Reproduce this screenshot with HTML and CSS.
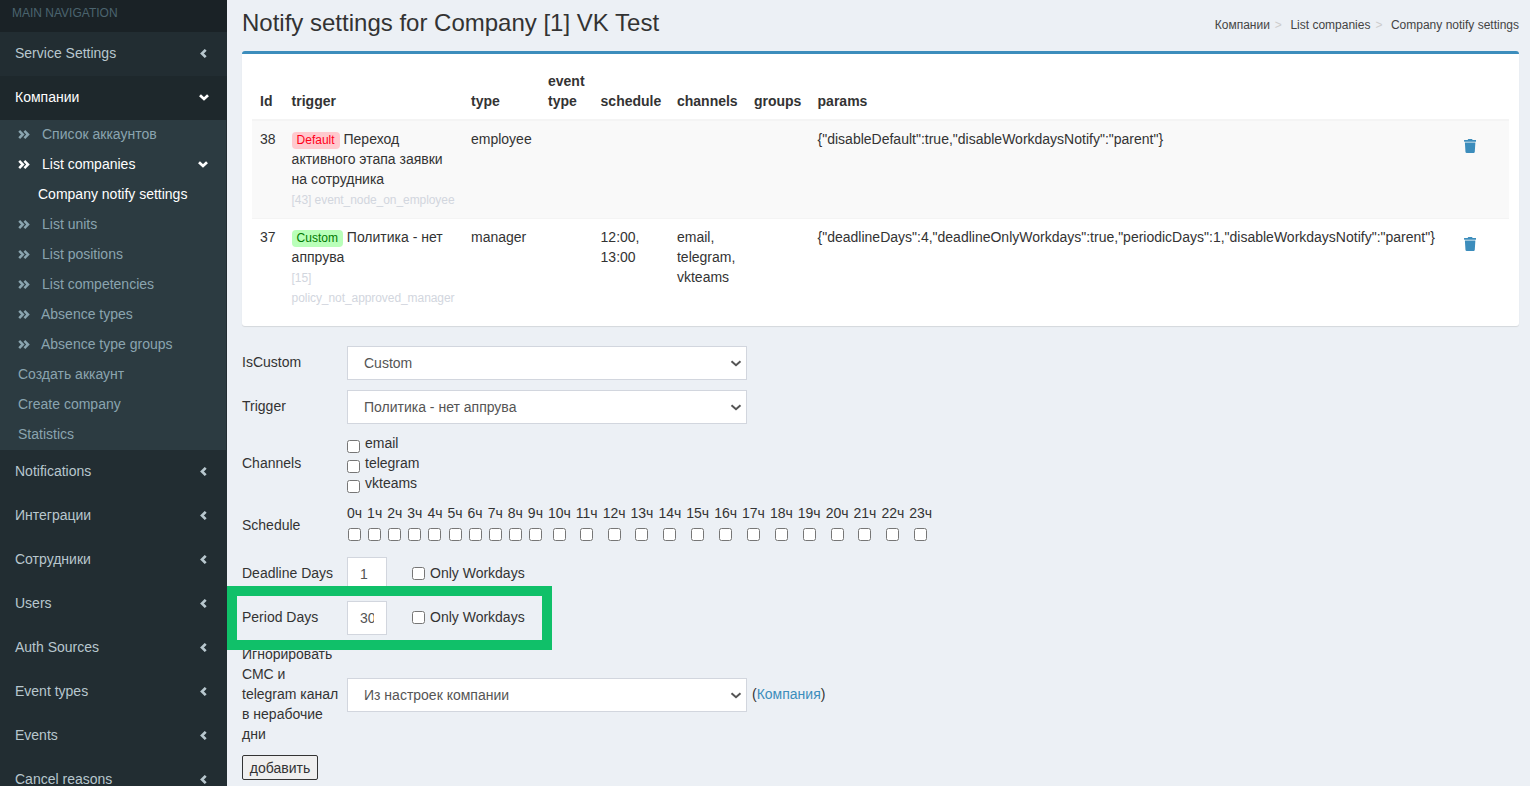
FILE: index.html
```html
<!DOCTYPE html>
<html lang="en">
<head>
<meta charset="utf-8">
<title>Notify settings</title>
<link rel="stylesheet" href="styles.css">
</head>
<body>
<svg class="defs" width="0" height="0" aria-hidden="true">
  <symbol id="left" viewBox="0 0 7 9"><path d="M5.7 .9 2 4.5 5.7 8.1" fill="none" stroke="currentColor" stroke-width="2.7"/></symbol>
  <symbol id="down" viewBox="0 0 10 7"><path d="M1 1.2 5 5 9 1.2" fill="none" stroke="currentColor" stroke-width="2.7"/></symbol>
  <symbol id="dbl" viewBox="0 0 12 9"><path d="M1.2 .9 4.8 4.5 1.2 8.1M6.4 .9 10 4.5 6.4 8.1" fill="none" stroke="currentColor" stroke-width="2.5"/></symbol>
  <symbol id="trash" viewBox="0 0 448 512"><path fill="currentColor" d="M432 32H312l-9.4-18.7A24 24 0 0 0 281.1 0H166.8a23.72 23.72 0 0 0-21.4 13.3L136 32H16A16 16 0 0 0 0 48v32a16 16 0 0 0 16 16h416a16 16 0 0 0 16-16V48a16 16 0 0 0-16-16zM53.2 467a48 48 0 0 0 47.9 45h245.8a48 48 0 0 0 47.9-45L416 128H32z"/></symbol>
</svg>

<aside class="sidebar">
  <div class="nav-header">MAIN NAVIGATION</div>
  <a class="nav-item"><span>Service Settings</span><svg class="ico-left"><use href="#left"/></svg></a>
  <a class="nav-item active"><span>Компании</span><svg class="ico-down"><use href="#down"/></svg></a>
  <div class="tree">
    <a class="tree-item"><svg class="ico-dbl"><use href="#dbl"/></svg><span class="grow">Список аккаунтов</span></a>
    <a class="tree-item current"><svg class="ico-dbl"><use href="#dbl"/></svg><span class="grow">List companies</span><svg class="ico-down"><use href="#down"/></svg></a>
    <a class="tree-item sub">Company notify settings</a>
    <a class="tree-item"><svg class="ico-dbl"><use href="#dbl"/></svg><span class="grow">List units</span></a>
    <a class="tree-item"><svg class="ico-dbl"><use href="#dbl"/></svg><span class="grow">List positions</span></a>
    <a class="tree-item"><svg class="ico-dbl"><use href="#dbl"/></svg><span class="grow">List competencies</span></a>
    <a class="tree-item tight"><svg class="ico-dbl"><use href="#dbl"/></svg><span class="grow">Absence types</span></a>
    <a class="tree-item tight"><svg class="ico-dbl"><use href="#dbl"/></svg><span class="grow">Absence type groups</span></a>
    <a class="tree-item plain">Создать аккаунт</a>
    <a class="tree-item plain">Create company</a>
    <a class="tree-item plain">Statistics</a>
  </div>
  <a class="nav-item"><span>Notifications</span><svg class="ico-left"><use href="#left"/></svg></a>
  <a class="nav-item"><span>Интеграции</span><svg class="ico-left"><use href="#left"/></svg></a>
  <a class="nav-item"><span>Сотрудники</span><svg class="ico-left"><use href="#left"/></svg></a>
  <a class="nav-item"><span>Users</span><svg class="ico-left"><use href="#left"/></svg></a>
  <a class="nav-item"><span>Auth Sources</span><svg class="ico-left"><use href="#left"/></svg></a>
  <a class="nav-item"><span>Event types</span><svg class="ico-left"><use href="#left"/></svg></a>
  <a class="nav-item"><span>Events</span><svg class="ico-left"><use href="#left"/></svg></a>
  <a class="nav-item"><span>Cancel reasons</span><svg class="ico-left"><use href="#left"/></svg></a>
</aside>

<main class="content">
  <header class="page-head">
    <h1>Notify settings for Company [1] VK Test</h1>
    <nav class="crumbs">
      <a>Компании</a><i>&gt;</i><a>List companies</a><i>&gt;</i><a>Company notify settings</a>
    </nav>
  </header>

  <section class="box">
    <table class="data">
      <colgroup>
        <col class="c-id"><col class="c-trigger"><col class="c-type"><col class="c-event"><col class="c-sched"><col class="c-chan"><col class="c-groups"><col class="c-params"><col class="c-del">
      </colgroup>
      <thead>
        <tr><th>Id</th><th>trigger</th><th>type</th><th>event type</th><th>schedule</th><th>channels</th><th>groups</th><th>params</th><th></th></tr>
      </thead>
      <tbody>
        <tr class="odd">
          <td>38</td>
          <td><span class="tag tag-default">Default</span> Переход активного этапа заявки на сотрудника<div class="hint">[43] event_node_on_employee</div></td>
          <td>employee</td><td></td><td></td><td></td><td></td>
          <td>{"disableDefault":true,"disableWorkdaysNotify":"parent"}</td>
          <td><svg class="trash"><use href="#trash"/></svg></td>
        </tr>
        <tr>
          <td>37</td>
          <td><span class="tag tag-custom">Custom</span> Политика - нет аппрува<div class="hint">[15] policy_not_approved_manager</div></td>
          <td>manager</td><td></td><td>12:00, 13:00</td><td>email, telegram, vkteams</td><td></td>
          <td>{"deadlineDays":4,"deadlineOnlyWorkdays":true,"periodicDays":1,"disableWorkdaysNotify":"parent"}</td>
          <td><svg class="trash"><use href="#trash"/></svg></td>
        </tr>
      </tbody>
    </table>
  </section>

  <form class="form">
    <div class="row row-ctl">
      <label class="lbl">IsCustom</label>
      <select class="sel"><option>Custom</option><option>Default</option></select>
    </div>
    <div class="row row-ctl row-tight">
      <label class="lbl">Trigger</label>
      <select class="sel"><option>Политика - нет аппрува</option></select>
    </div>
    <div class="row">
      <label class="lbl">Channels</label>
      <div class="checks">
        <label class="chk"><input type="checkbox">email</label>
        <label class="chk"><input type="checkbox">telegram</label>
        <label class="chk"><input type="checkbox">vkteams</label>
      </div>
    </div>
    <div class="row">
      <label class="lbl">Schedule</label>
      <div class="hours">
        <label class="hour">0ч<input type="checkbox"></label>
        <label class="hour">1ч<input type="checkbox"></label>
        <label class="hour">2ч<input type="checkbox"></label>
        <label class="hour">3ч<input type="checkbox"></label>
        <label class="hour">4ч<input type="checkbox"></label>
        <label class="hour">5ч<input type="checkbox"></label>
        <label class="hour">6ч<input type="checkbox"></label>
        <label class="hour">7ч<input type="checkbox"></label>
        <label class="hour">8ч<input type="checkbox"></label>
        <label class="hour">9ч<input type="checkbox"></label>
        <label class="hour">10ч<input type="checkbox"></label>
        <label class="hour">11ч<input type="checkbox"></label>
        <label class="hour">12ч<input type="checkbox"></label>
        <label class="hour">13ч<input type="checkbox"></label>
        <label class="hour">14ч<input type="checkbox"></label>
        <label class="hour">15ч<input type="checkbox"></label>
        <label class="hour">16ч<input type="checkbox"></label>
        <label class="hour">17ч<input type="checkbox"></label>
        <label class="hour">18ч<input type="checkbox"></label>
        <label class="hour">19ч<input type="checkbox"></label>
        <label class="hour">20ч<input type="checkbox"></label>
        <label class="hour">21ч<input type="checkbox"></label>
        <label class="hour">22ч<input type="checkbox"></label>
        <label class="hour">23ч<input type="checkbox"></label>
      </div>
    </div>
    <div class="row row-ctl">
      <label class="lbl">Deadline Days</label>
      <input class="num" type="text" value="1">
      <label class="only"><input type="checkbox">Only Workdays</label>
    </div>
    <div class="row row-ctl">
      <label class="lbl">Period Days</label>
      <input class="num" type="text" value="30">
      <label class="only"><input type="checkbox">Only Workdays</label>
    </div>
    <div class="row row-last">
      <label class="lbl lbl-wrap">Игнорировать СМС и telegram канал в нерабочие дни</label>
      <select class="sel"><option>Из настроек компании</option></select>
      <span class="company-link">(<a>Компания</a>)</span>
    </div>
    <button class="submit" type="button">добавить</button>
  </form>
</main>

<div class="highlight"></div>
</body>
</html>
```

FILE: styles.css
```css
* { box-sizing: border-box; }
html, body { height: 786px; overflow: hidden; }
body {
  margin: 0;
  display: flex;
  background: #ecf0f5;
  color: #333;
  font: 14px/20px "Liberation Sans", Arial, sans-serif;
}
.defs { position: absolute; }

/* sidebar */
.sidebar { flex: 0 0 227px; height: 786px; overflow: hidden; background: #222d32; }
.nav-header { height: 32px; padding: 3px 12px; background: #1a2226; color: #4b646f; font-size: 12px; }
.nav-item {
  display: flex; align-items: center; justify-content: space-between;
  height: 44px; padding: 0 20px 2px 15px; color: #b8c7ce;
}
.nav-item.active { background: #1e282c; color: #fff; padding-right: 18px; }
.ico-left { width: 7px; height: 9px; color: #b8c7ce; }
.ico-down { width: 10px; height: 7px; color: #fff; }
.tree { background: #2c3b41; margin-right: 1px; }
.tree-item { display: flex; align-items: center; height: 30px; padding: 0 18px 2px; color: #8aa4af; }
.ico-dbl { width: 12px; height: 9px; margin-right: 12px; color: #8aa4af; flex: none; }
.tree-item.tight .ico-dbl { margin-right: 11px; }
.grow { flex: 1; }
.tree-item.current, .tree-item.sub { color: #fff; }
.current .ico-dbl { color: #fff; }
.tree-item.sub { padding-left: 38px; }

/* main */
.content { flex: 1; min-width: 0; padding: 0 11px 0 15px; }
.page-head { display: flex; align-items: flex-start; justify-content: space-between; height: 51px; }
h1 { margin: 9px 0 0; font-size: 24px; font-weight: 400; line-height: 28px; }
.crumbs { display: flex; margin-top: 15px; font-size: 12px; line-height: 20px; color: #444; }
.crumbs i { font-style: normal; color: #ccc; padding: 0 8.5px 0 5px; }

.box {
  background: #fff; border-top: 3px solid #3c8dbc; border-radius: 3px;
  box-shadow: 0 1px 1px rgba(0,0,0,.1); padding: 9px 10px 11px; height: 275px;
}
.data { width: 100%; border-collapse: collapse; table-layout: fixed; }
.c-id { width: 31.6px; } .c-trigger { width: 179.4px; } .c-type { width: 77px; } .c-event { width: 52.6px; }
.c-sched { width: 76.4px; } .c-chan { width: 77px; } .c-groups { width: 63.6px; } .c-params { width: 646px; } .c-del { width: 53.4px; }
.data th { padding: 8px; text-align: left; vertical-align: bottom; border-bottom: 2px solid #f4f4f4; }
.data td { padding: 8px 8px 9px; vertical-align: top; border-top: 1px solid #f4f4f4; }
.data tbody tr:first-child td { border-top: 0; }
.odd { background: #f9f9f9; }
.tag { display: inline-block; padding: 0 5px; border-radius: 4px; font-size: 12px; line-height: 17px; }
.tag-default { background: #ffc9ce; color: #ff0019; }
.tag-custom { background: #b9ffb9; color: #007a00; }
.hint { margin-right: -1px; font-size: 12px; letter-spacing: -.07px; color: #d2d6de; position: relative; top: 1px; }
.trash { display: block; width: 12.25px; height: 14px; margin-top: 10px; color: #3c8dbc; }

/* form */
.form { padding-top: 20px; }
.row { display: flex; align-items: center; margin-bottom: 10px; }
.row-tight { margin-bottom: 9px; }
.lbl { flex: 0 0 105px; }
.row-ctl .lbl { padding-bottom: 2px; }
.lbl-wrap { padding-right: 5px; }
.sel {
  appearance: none;
  width: 400px; height: 34px; padding: 6px 12px 6px 16px; border: 1px solid #d2d6de; border-radius: 0;
  background: #fff url("data:image/svg+xml,%3Csvg xmlns='http://www.w3.org/2000/svg' width='12' height='7'%3E%3Cpath d='M1.5 1.2 6 5.2l4.5-4' fill='none' stroke='%23555' stroke-width='2'/%3E%3C/svg%3E") no-repeat right 4px center;
  color: #555; font: inherit;
}
.checks { display: flex; flex-direction: column; }
.chk { display: flex; gap: 5px; height: 20px; }
.chk input { margin: 7px 0 0; width: 13px; height: 13px; }
.hours { display: flex; gap: 5px; height: 44px; }
.hour { display: flex; flex-direction: column; align-items: center; }
.hour input { margin: 5px 0 6px; width: 13px; height: 13px; }
.num {
  width: 40px; height: 34px; padding: 6px 12px; border: 1px solid #d2d6de; border-radius: 0;
  background: #fff; color: #555; font: inherit;
}
.only { display: flex; align-items: center; gap: 5px; margin-left: 25px; padding-bottom: 2px; }
.only input { margin: 0; width: 13px; height: 13px; }
.company-link { margin-left: 5px; }
.company-link a { color: #3c8dbc; }
.row-last { margin-top: -1px; margin-bottom: 11px; }
.row-last .sel { margin-top: 2px; }
.submit {
  display: block; height: 25px; width: 76px; padding: 0; border: 1px solid #333; border-radius: 2px;
  background: #efefef; color: #333; font: inherit;
}

/* annotation frame drawn over the screenshot */
.highlight {
  position: absolute; left: 227px; top: 586px; width: 325px; height: 64px;
  border: 10px solid #10c069;
}
```
